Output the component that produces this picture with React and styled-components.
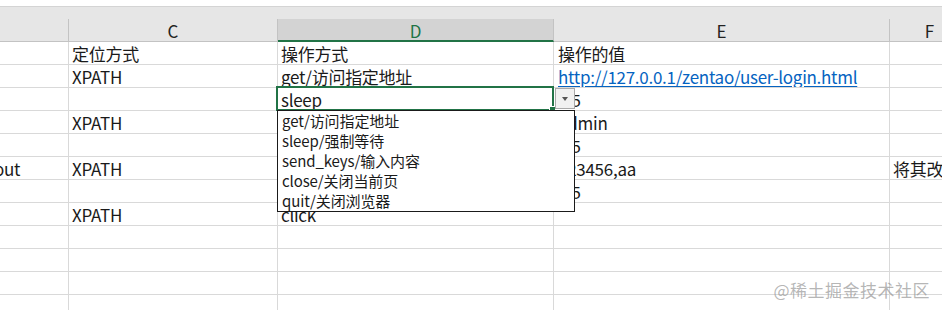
import React from 'react';
import styled, { createGlobalStyle } from 'styled-components';

const GlobalStyle = createGlobalStyle`
  html, body {
    margin: 0;
    padding: 0;
    background: #ffffff;
  }
  body {
    font-family: "Noto Sans CJK SC", "Noto Sans", sans-serif;
  }
`;

const COLS = '69px 209px 276px 336px 80px';

const Sheet = styled.div`
  position: relative;
  width: 942px;
  height: 310px;
  overflow: hidden;
  background: #fff;
`;

const TopGap = styled.div`
  height: 6px;
  border-bottom: 1px solid #d4d4d4;
`;

const HeaderBand = styled.div`
  height: 12px;
  background: #e6e6e6;
`;

const HeaderRow = styled.div`
  display: grid;
  grid-template-columns: ${COLS};
  height: 23px;
  background: #e6e6e6;
`;

const HeaderCell = styled.div`
  box-sizing: border-box;
  height: 23px;
  border-right: 1px solid #c3c3c3;
  border-bottom: ${p => (p.$active ? '2px solid #217346' : '1px solid #c3c3c3')};
  background: ${p => (p.$active ? '#d3d3d3' : '#e6e6e6')};
  color: ${p => (p.$active ? '#217346' : '#222')};
  font-size: 17px;
  line-height: 22px;
  text-align: center;
  padding-top: 1px;
`;

const Row = styled.div`
  display: grid;
  grid-template-columns: ${COLS};
  height: 23px;
`;

const Cell = styled.div`
  position: relative;
  box-sizing: border-box;
  height: 23px;
  border-right: 1px solid #d9d9d9;
  border-bottom: 1px solid #d9d9d9;
  padding: 1px 0 0 ${p => p.$indent ?? 3}px;
  text-indent: ${p => p.$shift ?? 0}px;
  font-size: 17px;
  line-height: 22px;
  letter-spacing: -0.28px;
  color: ${p => (p.$link ? '#0563c1' : '#1a1a1a')};
  text-decoration: ${p => (p.$link ? 'underline' : 'none')};
  text-underline-offset: 2px;
  white-space: nowrap;
  overflow: ${p => (p.$overflow ? 'visible' : 'hidden')};
  z-index: ${p => (p.$top ? 3 : 'auto')};
`;

const SelectionFrame = styled.div`
  position: absolute;
  left: -2px;
  top: -2px;
  right: -1px;
  bottom: -1px;
  border: 2px solid #217346;
  pointer-events: none;
  &::after {
    content: '';
    position: absolute;
    right: -4px;
    bottom: -4px;
    width: 5px;
    height: 5px;
    background: #217346;
    border: 1px solid #fff;
  }
`;

const DropButton = styled.div`
  position: absolute;
  left: 277px;
  top: 0;
  width: 20px;
  height: 21px;
  box-sizing: border-box;
  background: #f1f1f1;
  border: 1px solid #a9a9a9;
  display: flex;
  align-items: center;
  justify-content: center;
  z-index: 4;
`;

const Arrow = styled.span`
  width: 0;
  height: 0;
  border-left: 3.5px solid transparent;
  border-right: 3.5px solid transparent;
  border-top: 4px solid #555;
  margin-top: 1px;
`;

const DropList = styled.div`
  position: absolute;
  left: -1px;
  top: 22px;
  width: 298px;
  box-sizing: border-box;
  background: #fff;
  border: 1px solid #1a1a1a;
  z-index: 5;
`;

const DropItem = styled.div`
  height: 20px;
  line-height: 20px;
  padding-left: 4px;
  font-size: 15px;
  letter-spacing: -0.1px;
  color: #1a1a1a;
  white-space: nowrap;
`;

const Watermark = styled.div`
  position: absolute;
  right: 12px;
  bottom: 8px;
  font-size: 17px;
  color: rgba(150, 150, 150, 0.7);
  letter-spacing: 0.5px;
  z-index: 6;
`;

const options = [
  'get/访问指定地址',
  'sleep/强制等待',
  'send_keys/输入内容',
  'close/关闭当前页',
  'quit/关闭浏览器',
];

const rows = [
  ['', '定位方式', '操作方式', '操作的值', ''],
  ['', 'XPATH', 'get/访问指定地址', 'http://127.0.0.1/zentao/user-login.html', ''],
  ['', '', 'sleep', '0.5', ''],
  ['', 'XPATH', '', 'admin', ''],
  ['', '', '', '0.5', ''],
  ['out', 'XPATH', '', '123456,aa', '将其改为'],
  ['', '', '', '0.5', ''],
  ['', 'XPATH', 'click', '', ''],
  ['', '', '', '', ''],
  ['', '', '', '', ''],
  ['', '', '', '', ''],
  ['', '', '', '', ''],
];

const App = () => {
  return (
    <>
      <GlobalStyle />
      <Sheet>
        <TopGap />
        <HeaderBand />
        <HeaderRow>
          <HeaderCell />
          <HeaderCell>C</HeaderCell>
          <HeaderCell $active>D</HeaderCell>
          <HeaderCell>E</HeaderCell>
          <HeaderCell>F</HeaderCell>
        </HeaderRow>
        {rows.map((r, i) => (
          <Row key={i}>
            <Cell $indent={0} $shift={-6}>{r[0]}</Cell>
            <Cell>{r[1]}</Cell>
            {i === 2 ? (
              <Cell $overflow $top>
                {r[2]}
                <SelectionFrame />
                <DropButton>
                  <Arrow />
                </DropButton>
                <DropList>
                  {options.map(o => (
                    <DropItem key={o}>{o}</DropItem>
                  ))}
                </DropList>
              </Cell>
            ) : (
              <Cell>{r[2]}</Cell>
            )}
            <Cell $indent={4} $link={i === 1}>{r[3]}</Cell>
            <Cell>{r[4]}</Cell>
          </Row>
        ))}
        <Watermark>@稀土掘金技术社区</Watermark>
      </Sheet>
    </>
  );
};

export default App;
